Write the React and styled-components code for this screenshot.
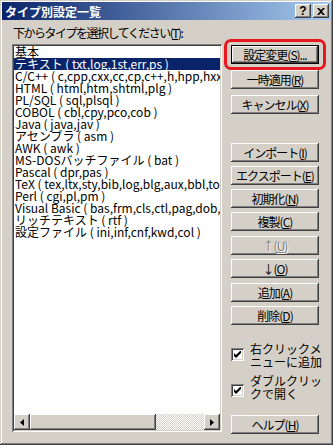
import styled, { createGlobalStyle } from "styled-components";

const GlobalStyle = createGlobalStyle`
  html, body {
    margin: 0;
    background: #d4d0c8;
  }
  body {
    font-family: "Noto Sans CJK JP", "Noto Sans", sans-serif;
  }
`;

const raised = `
  box-shadow: inset -1px -1px #404040, inset 1px 1px #ffffff,
    inset -2px -2px #808080, inset 2px 2px #d4d0c8;
`;

const sunken = `
  box-shadow: inset 1px 1px #808080, inset -1px -1px #ffffff,
    inset 2px 2px #404040, inset -2px -2px #d4d0c8;
`;

const Window = styled.div`
  position: relative;
  width: 333px;
  height: 445px;
  box-sizing: border-box;
  padding: 2px;
  overflow: hidden;
  background: #d4d0c8;
  box-shadow: inset -1px -1px #404040, inset 1px 1px #d4d0c8,
    inset -2px -2px #808080, inset 2px 2px #ffffff;
  display: flex;
  flex-direction: column;
`;

const TitleBar = styled.div`
  height: 18px;
  flex-shrink: 0;
  display: flex;
  align-items: center;
  padding: 0 2px 0 3px;
  background: linear-gradient(to right, #0a246a, #a6caf0);
  color: #ffffff;
  font-size: 12px;
  font-weight: bold;
`;

const Title = styled.span`
  flex: 1;
  white-space: nowrap;
`;

const CaptionButton = styled.div`
  width: 16px;
  height: 14px;
  margin-left: ${(p) => p.$gap || 0}px;
  background: #d4d0c8;
  ${raised}
  display: flex;
  align-items: center;
  justify-content: center;
  color: #000;
  font-family: "Liberation Sans", sans-serif;
  font-size: 12px;
  font-weight: bold;
  line-height: 14px;
`;

const Body = styled.div`
  flex: 1;
  display: flex;
  padding: 6px 0 0 10px;
`;

const LeftCol = styled.div`
  width: 210px;
  display: flex;
  flex-direction: column;
`;

const Label = styled.div`
  height: 18px;
  line-height: 14px;
  font-size: 12px;
  letter-spacing: -1.5px;
  padding-left: 1px;
  color: #000;
  white-space: nowrap;
`;

const ListBox = styled.div`
  height: 388px;
  box-sizing: border-box;
  padding: 2px;
  background: #ffffff;
  ${sunken}
  display: flex;
  flex-direction: column;
`;

const Items = styled.div`
  flex: 1;
  overflow: hidden;
`;

const Row = styled.div`
  height: 12px;
  line-height: 12px;
  font-size: 12px;
  padding-left: 1px;
  white-space: nowrap;
  color: ${(p) => (p.$selected ? "#ffffff" : "#000000")};
  background: ${(p) => (p.$selected ? "#0a246a" : "transparent")};
`;

const HScroll = styled.div`
  height: 16px;
  flex-shrink: 0;
  display: flex;
`;

const ArrowButton = styled.div`
  width: 16px;
  height: 16px;
  background: #d4d0c8;
  ${raised}
  display: flex;
  align-items: center;
  justify-content: center;
`;

const Thumb = styled.div`
  width: 126px;
  background: #d4d0c8;
  ${raised}
`;

const Track = styled.div`
  flex: 1;
  background: repeating-conic-gradient(#d4d0c8 0 25%, #ffffff 0 50%) 0 0 / 2px 2px;
`;

const RightCol = styled.div`
  margin-left: 9px;
  width: 88px;
  padding-top: 19px;
  display: flex;
  flex-direction: column;
`;

const Button = styled.div`
  height: 19px;
  flex-shrink: 0;
  margin-top: ${(p) => p.$gap || 0}px;
  background: #d4d0c8;
  ${(p) =>
    p.$default
      ? `box-shadow: inset 0 0 0 1px #000000, inset -2px -2px #404040,
          inset 2px 2px #ffffff, inset -3px -3px #808080;`
      : raised}
  display: flex;
  align-items: center;
  justify-content: center;
  font-size: 12px;
  line-height: 12px;
  letter-spacing: -1px;
  white-space: nowrap;
  color: ${(p) => (p.$disabled ? "#808080" : "#000000")};
  text-shadow: ${(p) => (p.$disabled ? "1px 1px #ffffff" : "none")};
`;

const Key = styled.span`
  text-decoration: underline;
`;

const CheckRow = styled.div`
  height: 26px;
  flex-shrink: 0;
  display: flex;
  align-items: center;
  margin-top: ${(p) => p.$gap || 0}px;
  font-size: 12px;
  line-height: 13px;
  color: #000;
  white-space: nowrap;
`;

const CheckBox = styled.span`
  width: 13px;
  height: 13px;
  flex-shrink: 0;
  box-sizing: border-box;
  margin-top: ${(p) => p.$shift || 0}px;
  background: #ffffff;
  ${sunken}
  display: flex;
  align-items: center;
  justify-content: center;
  margin-right: 6px;
`;

const Highlight = styled.div`
  position: absolute;
  left: 224px;
  top: 39px;
  width: 102px;
  height: 31px;
  box-sizing: border-box;
  border: 3px solid #e8161e;
  border-radius: 7px;
  pointer-events: none;
`;

const items = [
  "基本",
  "テキスト ( txt,log,1st,err,ps )",
  "C/C++ ( c,cpp,cxx,cc,cp,c++,h,hpp,hxx,hh,hp,h++ )",
  "HTML ( html,htm,shtml,plg )",
  "PL/SQL ( sql,plsql )",
  "COBOL ( cbl,cpy,pco,cob )",
  "Java ( java,jav )",
  "アセンブラ ( asm )",
  "AWK ( awk )",
  "MS-DOSバッチファイル ( bat )",
  "Pascal ( dpr,pas )",
  "TeX ( tex,ltx,sty,bib,log,blg,aux,bbl,toc,lof,lot,idx )",
  "Perl ( cgi,pl,pm )",
  "Visual Basic ( bas,frm,cls,ctl,pag,dob,dsr,vb )",
  "リッチテキスト ( rtf )",
  "設定ファイル ( ini,inf,cnf,kwd,col )",
];

const Check = () => (
  <svg width="7" height="7" viewBox="0 0 7 7">
    <path d="M0 2v3l2 2 5-5V-1L2 4z" fill="#000" />
  </svg>
);

const App = () => {
  return (
    <>
      <GlobalStyle />
      <Window>
        <TitleBar>
          <Title>タイプ別設定一覧</Title>
          <CaptionButton>?</CaptionButton>
          <CaptionButton $gap={2}>
            <svg width="8" height="7" viewBox="0 0 8 7">
              <path d="M0 0h2l2 2 2-2h2L5 3.5 8 7H6L4 5 2 7H0l3-3.5z" fill="#000" />
            </svg>
          </CaptionButton>
        </TitleBar>
        <Body>
          <LeftCol>
            <Label>
              下からタイプを選択してください(<Key>T</Key>):
            </Label>
            <ListBox>
              <Items>
                {items.map((item, i) => (
                  <Row key={item} $selected={i === 1}>
                    {item}
                  </Row>
                ))}
              </Items>
              <HScroll>
                <ArrowButton>
                  <svg width="4" height="7" viewBox="0 0 4 7">
                    <path d="M4 0v7L0 3.5z" fill="#000" />
                  </svg>
                </ArrowButton>
                <Thumb />
                <Track />
                <ArrowButton>
                  <svg width="4" height="7" viewBox="0 0 4 7">
                    <path d="M0 0v7l4-3.5z" fill="#000" />
                  </svg>
                </ArrowButton>
              </HScroll>
            </ListBox>
          </LeftCol>
          <RightCol>
            <Button $default>
              設定変更(<Key>S</Key>)...
            </Button>
            <Button $gap={6}>
              一時適用(<Key>R</Key>)
            </Button>
            <Button $gap={6}>
              キャンセル(<Key>X</Key>)
            </Button>
            <Button $gap={29}>
              インポート(<Key>I</Key>)
            </Button>
            <Button $gap={4}>
              エクスポート(<Key>E</Key>)
            </Button>
            <Button $gap={4}>
              初期化(<Key>N</Key>)
            </Button>
            <Button $gap={4}>
              複製(<Key>C</Key>)
            </Button>
            <Button $gap={5} $disabled>
              ↑(<Key>U</Key>)
            </Button>
            <Button $gap={4}>
              ↓(<Key>O</Key>)
            </Button>
            <Button $gap={5}>
              追加(<Key>A</Key>)
            </Button>
            <Button $gap={4}>
              削除(<Key>D</Key>)
            </Button>
            <CheckRow $gap={17}>
              <CheckBox $shift={-2}>
                <Check />
              </CheckBox>
              <span>
                右クリックメ
                <br />
                ニューに追加
              </span>
            </CheckRow>
            <CheckRow $gap={6}>
              <CheckBox $shift={6}>
                <Check />
              </CheckBox>
              <span>
                ダブルクリッ
                <br />
                クで開く
              </span>
            </CheckRow>
            <Button $gap={15}>
              ヘルプ(<Key>H</Key>)
            </Button>
          </RightCol>
        </Body>
        <Highlight />
      </Window>
    </>
  );
};

export default App;
